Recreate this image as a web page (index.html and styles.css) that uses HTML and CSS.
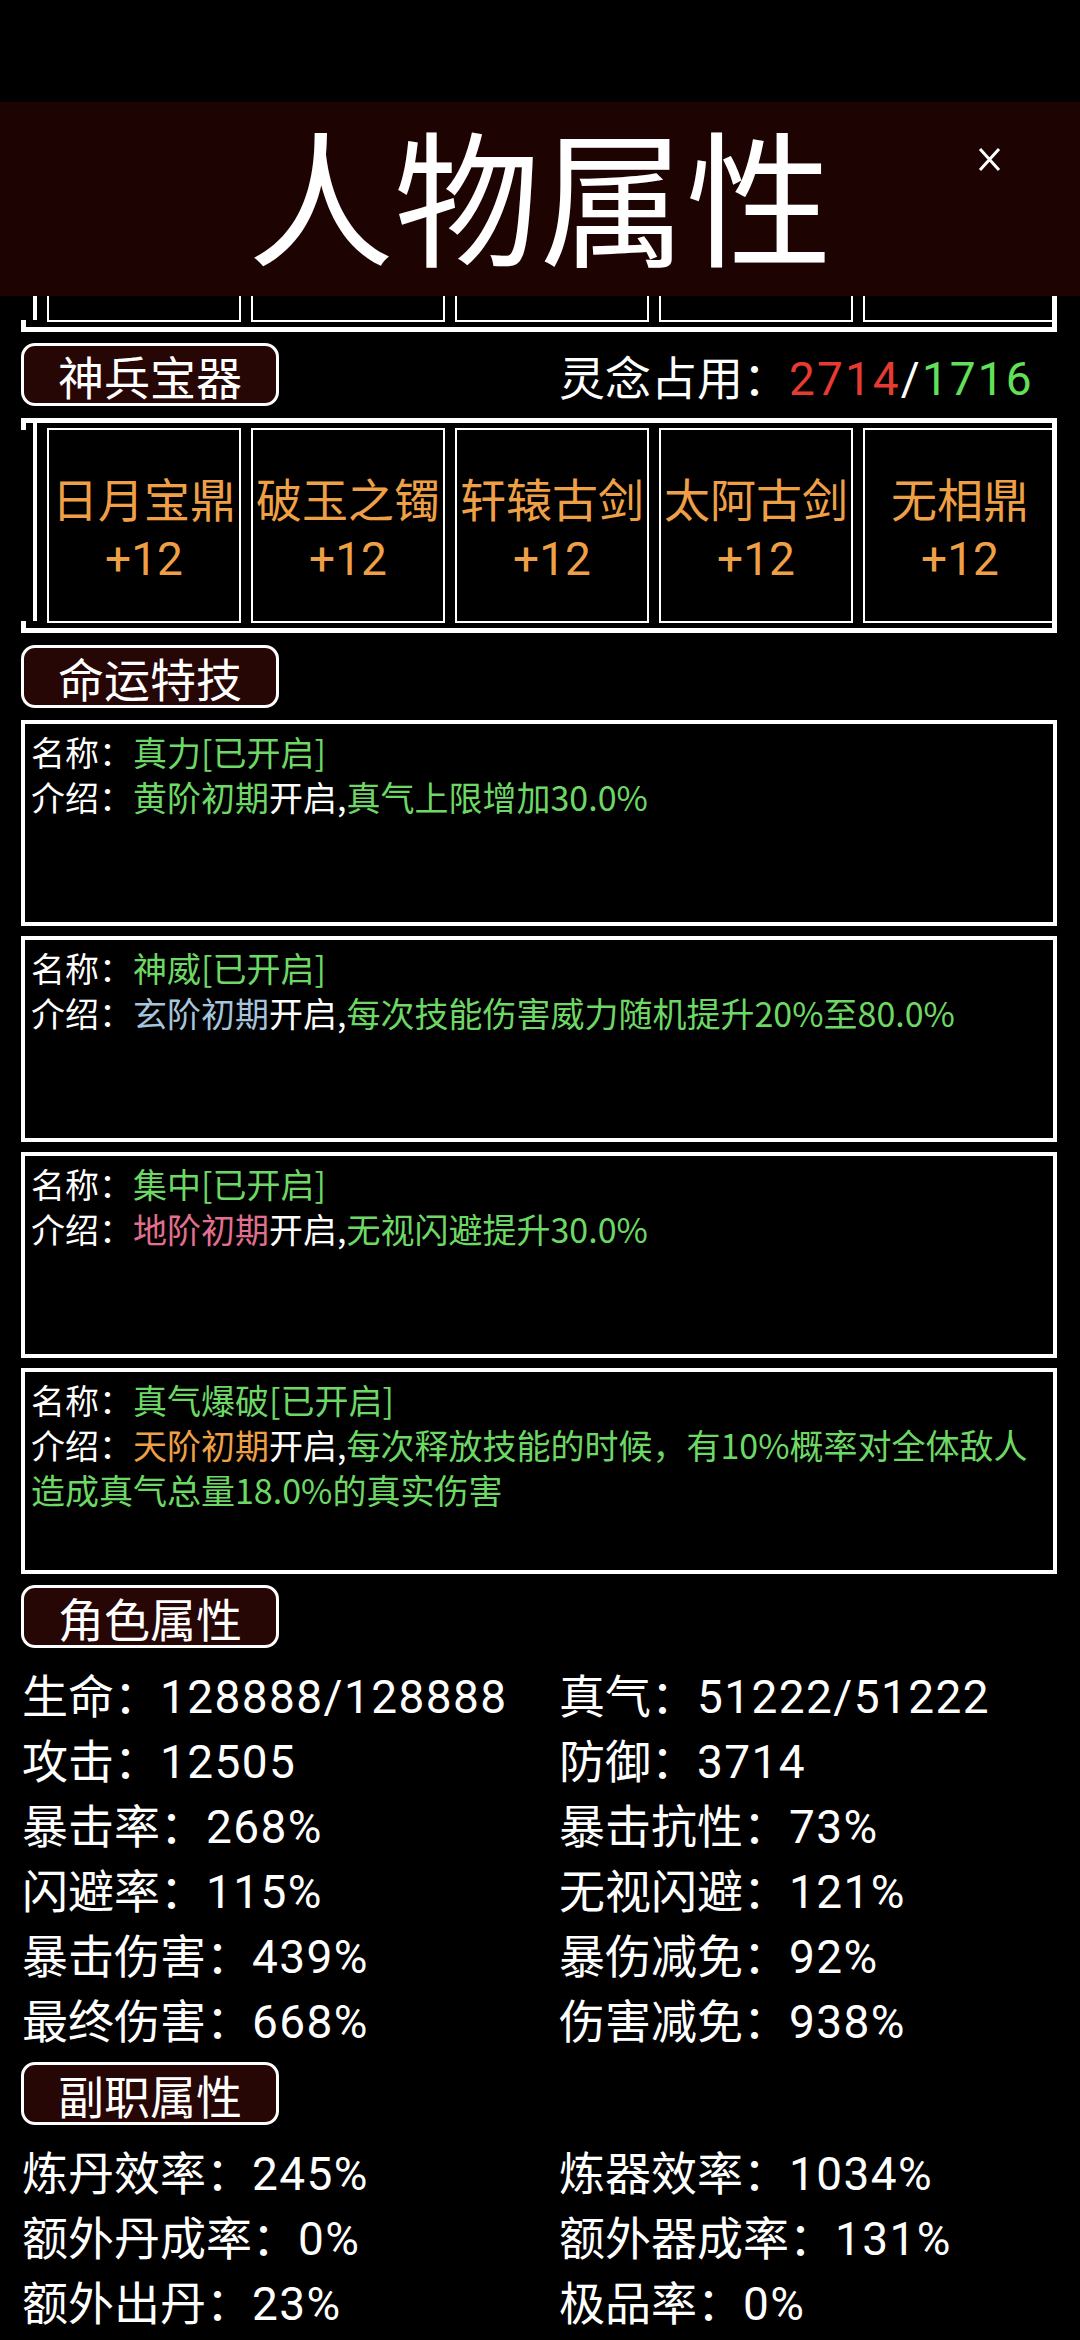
FILE: index.html
```html
<!DOCTYPE html>
<html>
<head>
<meta name="viewport" content="width=device-width, initial-scale=1">
<link rel="stylesheet" href="styles.css">
</head>
<body>

<div class="statusbar"></div>

<div class="header">
  <div></div>
  <div class="header-title">人物属性</div>
  <div class="header-close">
    <svg width="25" height="25" viewBox="0 0 25 25"><path d="M3 2 L22 23 M22 2 L3 23" stroke="#fff" stroke-width="3" fill="none"/></svg>
  </div>
</div>

<!-- previous frame, scrolled under the header -->
<div class="peek">
  <div class="frame">
    <div class="frame-edge"></div>
    <div class="frame-rail"></div>
    <div class="slots">
      <div class="slot"></div>
      <div class="slot"></div>
      <div class="slot"></div>
      <div class="slot"></div>
      <div class="slot"></div>
    </div>
  </div>
</div>

<div class="page">

  <div class="section-row first">
    <div class="pill">神兵宝器</div>
    <div class="spirit">灵念占用：<span class="num red">2714</span><span class="num">/</span><span class="num lime">1716</span></div>
  </div>

  <div class="frame gap">
    <div class="frame-edge"></div>
    <div class="frame-rail"></div>
    <div class="slots">
      <div class="slot"><p>日月宝鼎</p><p class="lv">+12</p></div>
      <div class="slot"><p>破玉之镯</p><p class="lv">+12</p></div>
      <div class="slot"><p>轩辕古剑</p><p class="lv">+12</p></div>
      <div class="slot"><p>太阿古剑</p><p class="lv">+12</p></div>
      <div class="slot"><p>无相鼎</p><p class="lv">+12</p></div>
    </div>
  </div>

  <div class="section-row gap">
    <div class="pill">命运特技</div>
  </div>

  <div class="skills">
    <div class="skill">
      <p>名称：<span class="green">真力[已开启]</span></p>
      <p>介绍：<span class="green">黄阶初期</span>开启,<span class="green">真气上限增加30.0%</span></p>
    </div>
    <div class="skill">
      <p>名称：<span class="green">神威[已开启]</span></p>
      <p>介绍：<span class="blue">玄阶初期</span>开启,<span class="green">每次技能伤害威力随机提升20%至80.0%</span></p>
    </div>
    <div class="skill">
      <p>名称：<span class="green">集中[已开启]</span></p>
      <p>介绍：<span class="pink">地阶初期</span>开启,<span class="green">无视闪避提升30.0%</span></p>
    </div>
    <div class="skill">
      <p>名称：<span class="green">真气爆破[已开启]</span></p>
      <p>介绍：<span class="orange">天阶初期</span>开启,<span class="green">每次释放技能的时候，有10%概率对全体敌人</span><span class="green">造成真气总量18.0%的真实伤害</span></p>
    </div>
  </div>

  <div class="section-row after">
    <div class="pill">角色属性</div>
  </div>

  <div class="stats">
    <div>生命：<span class="num">128888/128888</span></div>
    <div>真气：<span class="num">51222/51222</span></div>
    <div>攻击：<span class="num">12505</span></div>
    <div>防御：<span class="num">3714</span></div>
    <div>暴击率：<span class="num">268%</span></div>
    <div>暴击抗性：<span class="num">73%</span></div>
    <div>闪避率：<span class="num">115%</span></div>
    <div>无视闪避：<span class="num">121%</span></div>
    <div>暴击伤害：<span class="num">439%</span></div>
    <div>暴伤减免：<span class="num">92%</span></div>
    <div>最终伤害：<span class="num">668%</span></div>
    <div>伤害减免：<span class="num">938%</span></div>
  </div>

  <div class="section-row after">
    <div class="pill">副职属性</div>
  </div>

  <div class="stats">
    <div>炼丹效率：<span class="num">245%</span></div>
    <div>炼器效率：<span class="num">1034%</span></div>
    <div>额外丹成率：<span class="num">0%</span></div>
    <div>额外器成率：<span class="num">131%</span></div>
    <div>额外出丹：<span class="num">23%</span></div>
    <div>极品率：<span class="num">0%</span></div>
  </div>

</div>

</body>
</html>
```

FILE: styles.css
```css
html {
  box-sizing: border-box;
}

*, *:before, *:after {
  box-sizing: inherit;
}

body {
  margin: 0;
  width: 1080px;
  height: 2340px;
  overflow: hidden;
  background: #000;
  color: #fff;
  font-family: "Noto Sans CJK SC", "Noto Sans", sans-serif;
}

p {
  margin: 0;
}

.statusbar {
  height: 102px;
  background: #000;
}

.header {
  height: 194px;
  background: #1e0303;
  display: grid;
  grid-template-columns: 1fr auto 1fr;
}

.header-title {
  font-size: 146px;
  line-height: 1;
  align-self: center;
  margin-top: -14px;
}

.header-close {
  justify-self: end;
  align-self: start;
  margin: 45px 78px 0 0;
  line-height: 0;
}

.peek {
  height: 36px;
  overflow: hidden;
  display: flex;
  flex-direction: column;
  justify-content: flex-end;
  padding: 0 23px 0 21px;
}

.page {
  padding: 0 23px 0 21px;
}

/* frame with five slots */
.frame {
  display: flex;
  flex: none;
  height: 215px;
  border: 5px solid #fff;
  border-left: 0;
  overflow: hidden;
}

.frame-edge {
  width: 5px;
  flex: none;
  border-top: 7px solid #fff;
  border-bottom: 7px solid #fff;
}

.frame-rail {
  width: 4px;
  flex: none;
  margin: 0 0 7px 7px;
  background: #fff;
}

.slots {
  display: flex;
  gap: 10px;
  margin: 5px 0 5px 10px;
}

.slot {
  flex: none;
  width: 194px;
  border: 2px solid #fff;
  display: flex;
  flex-direction: column;
  justify-content: center;
  align-items: center;
  font-size: 46px;
  line-height: 58px;
  color: #efa046;
  white-space: nowrap;
}

.slot .lv {
  font-family: Roboto, "Noto Sans CJK SC", sans-serif;
  margin: 4px 0 -4px;
}

/* section headings */
.section-row {
  display: grid;
  grid-template-columns: 538px 1fr;
  align-items: center;
}

.section-row.first {
  margin-top: 11px;
}

.section-row.after {
  margin-top: 11px;
}

.gap {
  margin-top: 12px;
}

.pill {
  width: 258px;
  height: 63px;
  border: 3px solid #fff;
  border-radius: 14px;
  background: #270606;
  display: flex;
  align-items: center;
  justify-content: center;
  font-size: 46px;
  line-height: 1;
}

.spirit {
  font-size: 46px;
  line-height: 1;
}

.num {
  font-family: Roboto, "Noto Sans CJK SC", sans-serif;
  letter-spacing: 1.4px;
  line-height: 1;
}

.spirit .num {
  letter-spacing: 2.1px;
  line-height: 36px;
}

.red {
  color: #e53b32;
}

.lime {
  color: #62e05a;
}

/* skills */
.skills {
  margin-top: 12px;
  display: flex;
  flex-direction: column;
  gap: 10px;
}

.skill {
  height: 206px;
  border: 4px solid #fff;
  padding: 5px 6px;
  font-size: 34px;
  line-height: 45px;
}

.skill span {
  display: inline-block;
}

.green {
  color: #6dd866;
}

.blue {
  color: #a5c5dd;
}

.pink {
  color: #e0708e;
}

.orange {
  color: #efa046;
}

/* stats */
.stats {
  margin-top: 13px;
  padding-left: 1px;
  display: grid;
  grid-template-columns: 537px 1fr;
  font-size: 46px;
  line-height: 65px;
  white-space: nowrap;
}
```
